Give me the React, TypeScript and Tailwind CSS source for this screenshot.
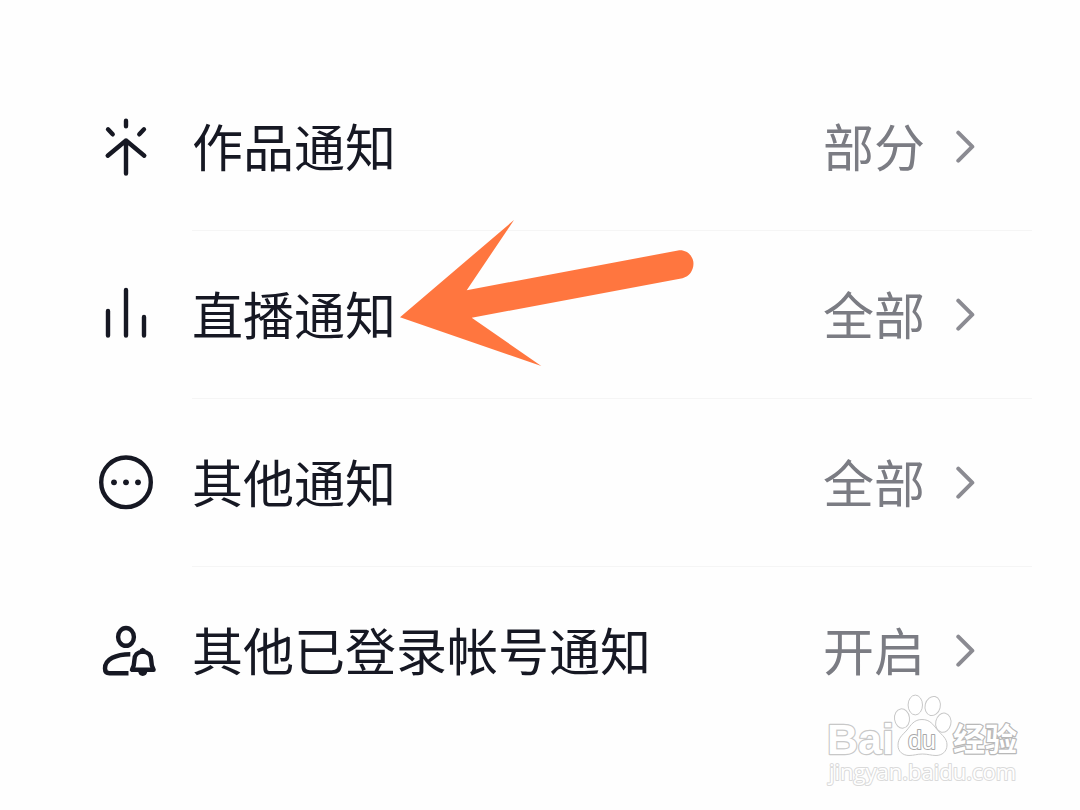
import type { ReactNode } from "react";

interface NoticeSetting {
  label: string;
  value: string;
  icon: ReactNode;
}

const settings: NoticeSetting[] = [
  { label: "作品通知", value: "部分", icon: <WorksIcon /> },
  { label: "直播通知", value: "全部", icon: <LiveIcon /> },
  { label: "其他通知", value: "全部", icon: <MoreIcon /> },
  { label: "其他已登录帐号通知", value: "开启", icon: <AccountBellIcon /> },
];

export default function App() {
  return (
    <main className="relative min-h-screen bg-[#fefefe] pt-[63px] pb-[75px] font-['Noto_Sans_CJK_SC',sans-serif]">
      <ul>
        {settings.map((s, i) => (
          <SettingRow key={s.label} setting={s} last={i === settings.length - 1} />
        ))}
      </ul>
      <PointerArrow />
      <Watermark />
    </main>
  );
}

function SettingRow({ setting, last }: { setting: NoticeSetting; last: boolean }) {
  return (
    <li>
      <button type="button" className="flex w-full items-stretch gap-9 pr-12 pl-24 text-left cursor-pointer">
        <span className="flex w-[60px] shrink-0 items-center">{setting.icon}</span>
        <span className={`flex h-[168px] flex-1 items-center border-b pr-[57px] ${last ? "border-transparent" : "border-[#f5f5f5]"}`}>
          <span className="flex-1 pb-1 text-[51px] leading-[76px] text-[#161823]">{setting.label}</span>
          <span className="pb-1 text-[51px] leading-[76px] text-[#7b7c83]">{setting.value}</span>
          <Chevron />
        </span>
      </button>
    </li>
  );
}

function Icon({ children }: { children: ReactNode }) {
  return (
    <svg viewBox="0 0 60 60" className="size-[60px]" fill="none" stroke="#161823" strokeWidth="4.4"
      strokeLinecap="round" strokeLinejoin="round" aria-hidden="true">
      {children}
    </svg>
  );
}

function WorksIcon() {
  return (
    <Icon>
      <path d="M30 3.8V9.3M12 12.3L16.7 17.3M48 12.3L43.3 17.3" />
      <path d="M11.7 38.7L30 23.5L48.3 38.7M30 23.5V56.5" />
    </Icon>
  );
}

function LiveIcon() {
  return (
    <Icon>
      <path d="M12 26V50.5M30 5V50.5M48 32V50.5" />
    </Icon>
  );
}

function MoreIcon() {
  return (
    <Icon>
      <circle cx="30" cy="29.3" r="24.8" />
      <g fill="#161823" stroke="none">
        <circle cx="18" cy="29.3" r="2.9" />
        <circle cx="30" cy="29.3" r="2.9" />
        <circle cx="42" cy="29.3" r="2.9" />
      </g>
    </Icon>
  );
}

function AccountBellIcon() {
  return (
    <Icon>
      <ellipse cx="30" cy="15.9" rx="7.9" ry="8.9" />
      <path d="M34.3 33.2C20 33.2 9 38 9 47.5C9 50.8 10.8 52.2 13.5 52.2H32.5" strokeLinecap="butt" />
      <path d="M46.7 30.6C41.4 30.9 38.4 34.2 38.4 39C38.4 43.2 37.8 45.4 36 48.8H57.6C55.8 45.4 55.2 43.2 55.2 39C55.2 34.2 52 30.9 46.7 30.6Z" />
      <path d="M44.8 28.8L46.7 27.8L48.6 28.8" strokeWidth="2" />
      <path d="M42 50H51.5C51 53.2 49.4 54.9 46.7 54.9C44 54.9 42.5 53.2 42 50Z" fill="#161823" stroke="none" />
    </Icon>
  );
}

function Chevron() {
  return (
    <svg viewBox="0 0 20 36" className="ml-[30px] h-9 w-5 shrink-0" fill="none" stroke="#8b8b92" strokeWidth="4"
      strokeLinecap="round" strokeLinejoin="round" aria-hidden="true">
      <path d="M3.3 3.7L17.3 17.7L3.3 31.7" />
    </svg>
  );
}

// Points at the live notification row
function PointerArrow() {
  return (
    <svg viewBox="0 0 294 147" className="pointer-events-none absolute top-[220px] left-[400px] h-[147px] w-[294px]"
      fill="#ff763f" aria-hidden="true">
      <path d="M0 97.3L114 0L66.7 70.2L278 30.5C285.5 29.3 292 34.4 293.3 41.5C294.4 49 290 56.5 282.5 58.2L71.7 97.7L141.3 146Z" />
    </svg>
  );
}

function Watermark() {
  return (
    <svg viewBox="0 0 230 120" className="pointer-events-none absolute right-[40px] bottom-[10px] h-[120px] w-[230px]"
      fill="#fff" stroke="#c8c8c8" strokeWidth="1" strokeLinejoin="round" role="img" aria-label="Baidu 经验">
      <text x="17" y="74" fontSize="43" fontWeight="700" strokeWidth="2.4" paintOrder="stroke"
        fontFamily="'Liberation Sans', sans-serif">Bai</text>
      <ellipse cx="92" cy="38.5" rx="7.5" ry="9.7" transform="rotate(-8 92 38.5)" />
      <ellipse cx="105.3" cy="25" rx="7.2" ry="9.9" />
      <ellipse cx="122.7" cy="26" rx="7.6" ry="9.7" transform="rotate(14 122.7 26)" />
      <ellipse cx="133.3" cy="42.7" rx="7.6" ry="9.7" transform="rotate(12 133.3 42.7)" />
      <path d="M112 39.5C104 39.5 101 45 97 50C92 55.5 88 58 88 65.5C88 71.5 93 75.5 99 75.5C104 75.5 107 74 112.5 74C118 74 121 75.5 126 75.5C132 75.5 137 71.5 137 65C137 58 132 55.5 127.5 50C123 44.5 120 39.5 112 39.5Z" />
      <text x="98" y="69" fontSize="25" strokeWidth="2" paintOrder="stroke" stroke="#a8a8a8"
        fontFamily="'Liberation Sans', sans-serif">du</text>
      <text x="143" y="71" fontSize="32" fontWeight="700" strokeWidth="2.4" paintOrder="stroke" stroke="#b8b8b8"
        fontFamily="'Noto Sans CJK SC', sans-serif">经验</text>
      <text x="19" y="100" fontSize="22" strokeWidth="2" paintOrder="stroke" stroke="#dadada"
        fontFamily="'Open Sans', sans-serif">jingyan.baidu.com</text>
    </svg>
  );
}
